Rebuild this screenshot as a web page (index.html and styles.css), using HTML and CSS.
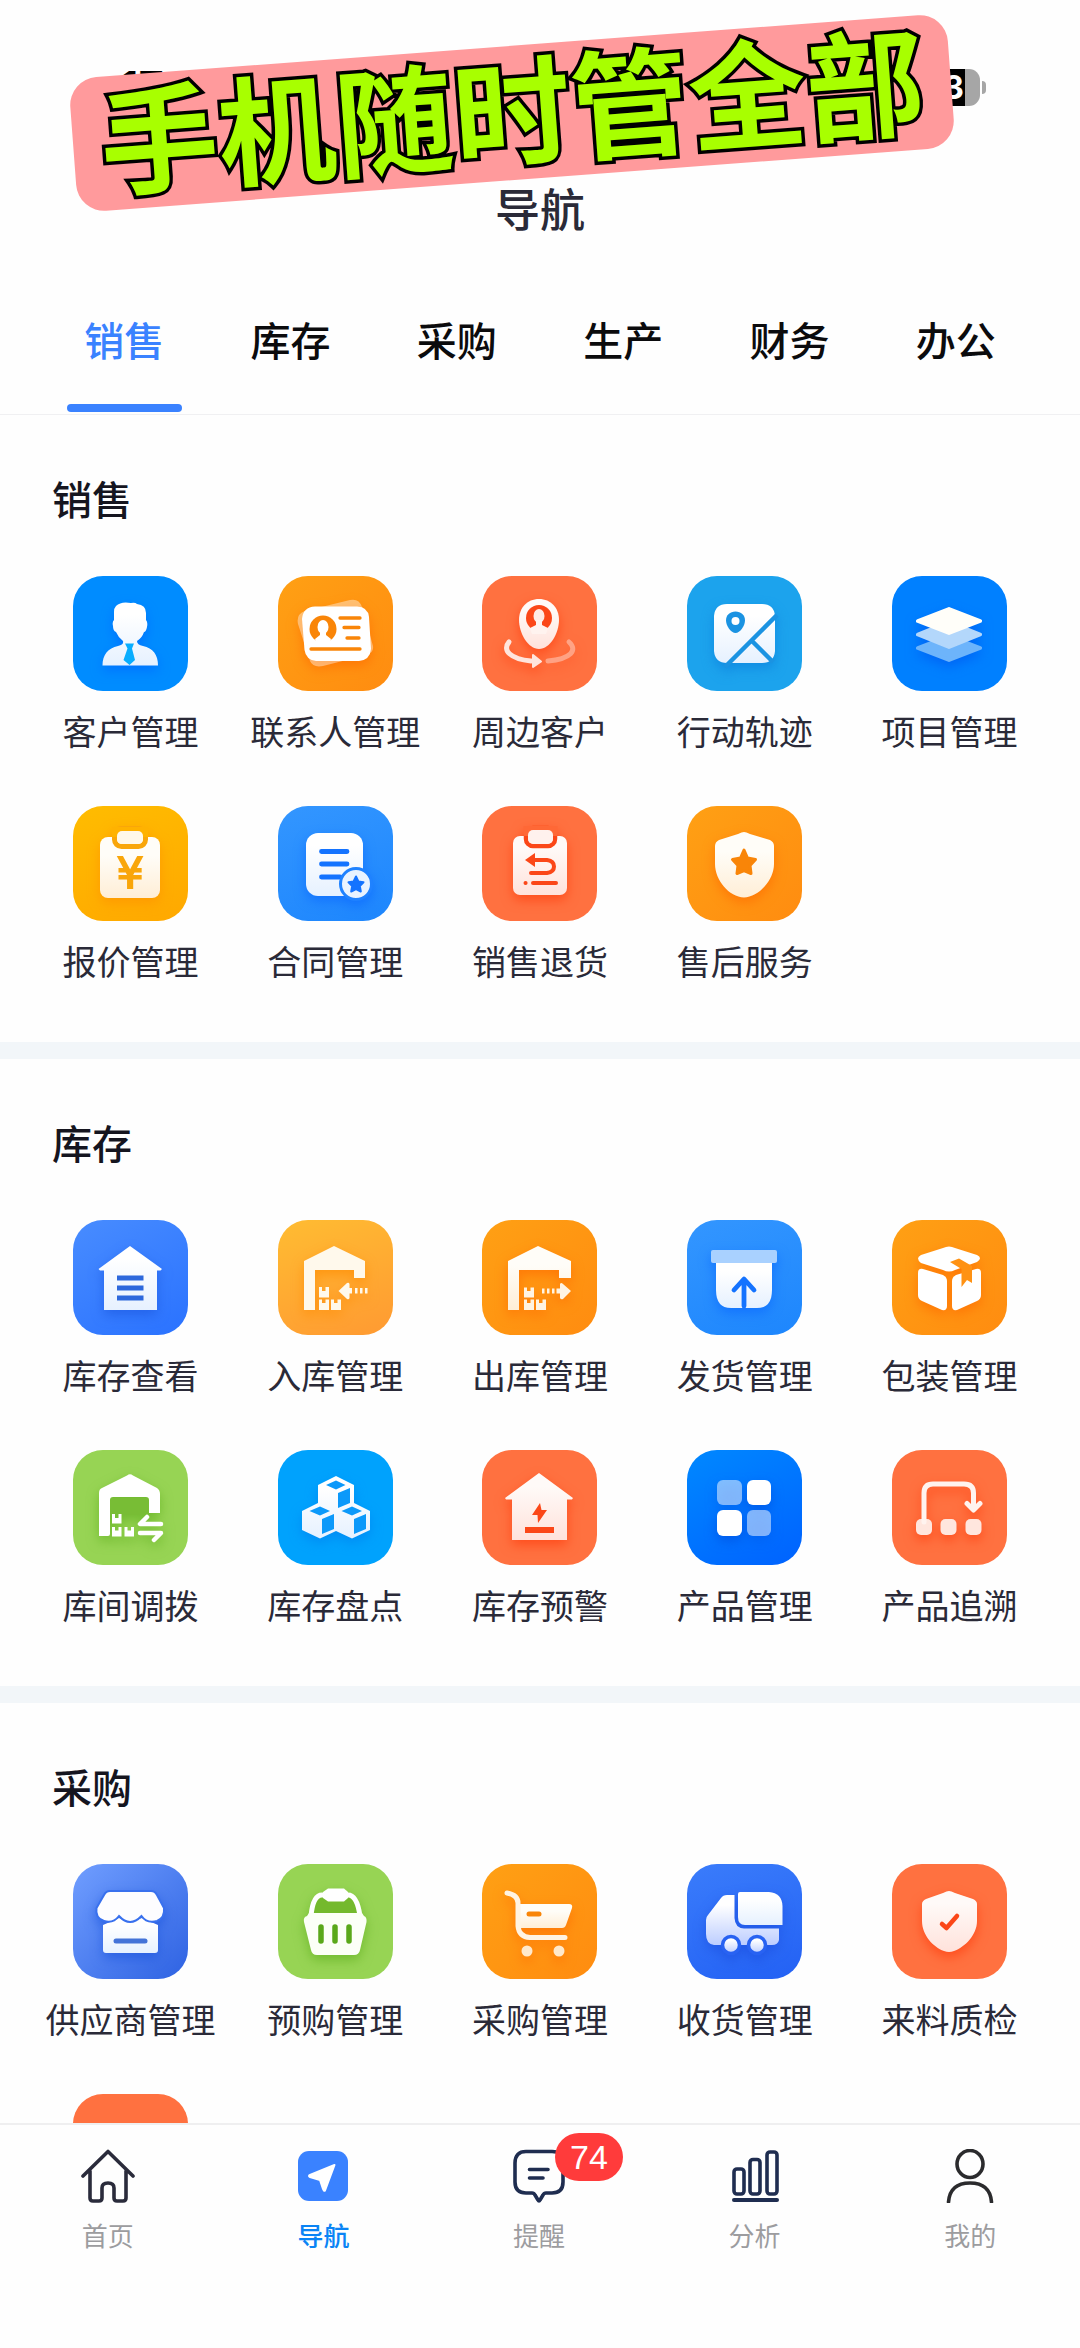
FILE: index.html
```
<!DOCTYPE html>
<html lang="zh-CN">
<head>
    <meta charset="UTF-8">
    <meta name="viewport" content="width=device-width, initial-scale=1.0">
    <title>导航</title>
    <link rel="stylesheet" href="styles.css">
</head>
<body>
    <!-- shared gradients -->
    <svg class="defs" width="0" height="0">
        <defs>
            <linearGradient id="warm" x1="0" y1="0" x2="0" y2="1"><stop offset="0.3" stop-color="#fffdf8"/><stop offset="1" stop-color="#ffeed6"/></linearGradient>
            <linearGradient id="rose" x1="0" y1="0" x2="0" y2="1"><stop offset="0.2" stop-color="#fffaf8"/><stop offset="1" stop-color="#ffe2db"/></linearGradient>
            <linearGradient id="cool" x1="0" y1="0" x2="0" y2="1"><stop offset="0.2" stop-color="#ffffff"/><stop offset="1" stop-color="#e6f1ff"/></linearGradient>
            <linearGradient id="lilac" x1="0" y1="0" x2="0" y2="1"><stop offset="0.2" stop-color="#ffffff"/><stop offset="1" stop-color="#bccdff"/></linearGradient>
        </defs>
    </svg>

    <div class="app">
        <header>
            <div class="status">
                <span class="time">17</span>
                <span class="battery">3</span>
            </div>
            <h1>导航</h1>
            <div class="banner">手机随时管全部</div>
        </header>

        <nav class="tabs">
            <button type="button" class="tab active">销售</button>
            <button type="button" class="tab">库存</button>
            <button type="button" class="tab">采购</button>
            <button type="button" class="tab">生产</button>
            <button type="button" class="tab">财务</button>
            <button type="button" class="tab">办公</button>
        </nav>

        <main>
            <section>
                <h2>销售</h2>
                <div class="grid">
                    <a href="#" class="item">
                        <span class="tile azure"><svg viewBox="0 0 115 115">
                            <path fill="url(#cool)" d="M43 30Q48 25 58 27Q62 26 64 28Q73 29 73 37V44Q75 46 74 51Q73 56 71 56Q69 62 64 65Q64 69 70 70C80 72 85 79 85 89.500H29.500C29.500 79 35 72 45 70Q51 69 50 65Q45 61 43 56Q40 55 40 50Q39 46 41 44V36Q41 32 43 30z"/>
                            <path fill="#08adff" d="M52 67.500H61L59 72.500 62 84 56.500 89 50.500 84 54.500 72.500z"/>
                        </svg></span>
                        <span class="label">客户管理</span>
                    </a>
                    <a href="#" class="item">
                        <span class="tile orange"><svg viewBox="0 0 115 115">
                            <path fill="#fff" opacity="0.4" d="M27 35L72 24Q81 22 84 31L95 70Q96 77 88 79L45 90Q35 92 32 85L20 48Q18 38 27 35z"/>
                            <path fill="#fff" d="M37 30.500H79Q90 31 91 41L93 73Q92 84 81 85H38Q28 84 26.500 74L24 43Q25 31 37 30.500z"/>
                            <circle cx="45" cy="53" r="13.500" fill="currentColor"/>
                            <ellipse cx="45" cy="51" rx="5.500" ry="7" fill="#fff"/>
                            <path fill="#fff" d="M42 55H48V59L53 63 51 69H39L37 63 42 59z"/>
                            <path stroke="currentColor" stroke-width="3.300" stroke-linecap="round" d="M62 42H82M66 51.500H81M69 62H81M33 73H82"/>
                        </svg></span>
                        <span class="label">联系人管理</span>
                    </a>
                    <a href="#" class="item">
                        <span class="tile coral"><svg viewBox="0 0 115 115">
                            <path fill="url(#rose)" d="M57 23C69 23 77 32 77 44C77 57 68 73 57 73S37 57 37 44C37 32 45 23 57 23z"/>
                            <circle cx="57" cy="42" r="13" fill="currentColor"/>
                            <ellipse cx="57" cy="40" rx="5.500" ry="7" fill="#ffeae4"/>
                            <path fill="#fff3ef" d="M54 44H60V49L66 52 64 58H50L48 52 54 49z"/>
                            <g fill="none" stroke="#ffe5dd" stroke-width="5" stroke-linecap="round">
                                <path d="M27 66C20 74 28 83 49 85"/>
                                <path opacity="0.450" d="M66 85C89 83 96 74 87 66"/>
                            </g>
                            <path fill="#ffe5dd" stroke="#ffe5dd" stroke-width="2" stroke-linejoin="round" d="M51 79L59 85.500 51 91z"/>
                        </svg></span>
                        <span class="label">周边客户</span>
                    </a>
                    <a href="#" class="item">
                        <span class="tile sky"><svg viewBox="0 0 115 115">
                            <path fill="url(#cool)" d="M40 28H75Q87 28 88 40V75Q87 87 75 87H40Q28 87 27 75V40Q28 28 40 28z"/>
                            <path fill="currentColor" d="M48.500 35.500C54 35.500 58 39 58 44.500C58 50 53 57 48.500 57S39 50 39 44.500C39 39 43 35.500 48.500 35.500z"/>
                            <circle cx="48.500" cy="45" r="4" fill="#fff"/>
                            <path stroke="currentColor" stroke-width="4.500" d="M38 91L90 39M64 64L86 86"/>
                        </svg></span>
                        <span class="label">行动轨迹</span>
                    </a>
                    <a href="#" class="item">
                        <span class="tile blue"><svg viewBox="0 0 115 115" stroke-width="4" stroke-linejoin="round">
                            <path fill="#6db4fb" stroke="#6db4fb" d="M57 60L88 72 57 84 26 72z"/>
                            <path fill="#b3d7fb" stroke="#b3d7fb" d="M57 46L88 58.500 57 71 26 58.500z"/>
                            <path fill="#fffef9" stroke="#fffef9" d="M57 33L88 45 57 57 26 45z"/>
                        </svg></span>
                        <span class="label">项目管理</span>
                    </a>
                    <a href="#" class="item">
                        <span class="tile amber"><svg viewBox="0 0 115 115">
                            <rect x="27" y="31" width="60" height="61" rx="8" fill="url(#warm)"/>
                            <rect x="41.500" y="22.500" width="31" height="18" rx="7" fill="#fff8e9" stroke="currentColor" stroke-width="5"/>
                            <path stroke="#ffb200" stroke-width="10" d="M39 26H75"/>
                            <rect x="44" y="25" width="26" height="13" rx="5" fill="#fff8e9"/>
                            <text x="57" y="82" class="yen">¥</text>
                        </svg></span>
                        <span class="label">报价管理</span>
                    </a>
                    <a href="#" class="item">
                        <span class="tile dodger"><svg viewBox="0 0 115 115">
                            <rect x="28" y="27" width="57" height="63" rx="12" fill="url(#cool)"/>
                            <path stroke="currentColor" stroke-width="4.800" stroke-linecap="round" d="M43.500 45.500H69M43.500 58H69M43.500 71H62"/>
                            <circle cx="78" cy="78" r="15.500" fill="#e9f3ff" stroke="#1f82ff" stroke-width="3"/>
                            <path fill="currentColor" stroke="currentColor" stroke-width="2" stroke-linejoin="round" d="M78 70.500L80.400 75.500 85.500 76.200 81.800 80 82.800 85.500 78 83 73.200 85.500 74.200 80 70.500 76.200 75.600 75.500z"/>
                        </svg></span>
                        <span class="label">合同管理</span>
                    </a>
                    <a href="#" class="item">
                        <span class="tile coral"><svg viewBox="0 0 115 115">
                            <rect x="31" y="30" width="54" height="59" rx="7" fill="url(#rose)"/>
                            <rect x="44" y="22" width="29" height="18" rx="7" fill="#fff1ed" stroke="currentColor" stroke-width="4.500"/>
                            <path stroke="#ff6836" stroke-width="10" d="M41.500 25H75.500"/>
                            <rect x="46" y="24" width="25" height="14" rx="5" fill="#fff1ed"/>
                            <path fill="currentColor" d="M43 54L53 47V61z"/>
                            <path fill="none" stroke="currentColor" stroke-width="4" stroke-linecap="round" d="M52 54H65Q72 55 72 60.500Q72 66 65 67H49M51 77H74M43.500 77h0.100"/>
                        </svg></span>
                        <span class="label">销售退货</span>
                    </a>
                    <a href="#" class="item">
                        <span class="tile orange"><svg viewBox="0 0 115 115">
                            <path fill="url(#warm)" d="M57 26Q59 26 63 28L83 34Q87 36 87 40V58C87 74 72 91 57 91.500C42 91 28 74 28 58V40Q28 36 32 34L51 28Q55 26 57 26z"/>
                            <path fill="currentColor" stroke="currentColor" stroke-width="3" stroke-linejoin="round" d="M57 44L60.500 52 68.500 53.500 63 59.500 64 67.500 57 64.500 50 67.500 51 59.500 45.500 53.500 53.500 52z"/>
                        </svg></span>
                        <span class="label">售后服务</span>
                    </a>
                </div>
            </section>

            <section>
                <h2>库存</h2>
                <div class="grid">
                    <a href="#" class="item">
                        <span class="tile royal"><svg viewBox="0 0 115 115">
                            <path fill="url(#cool)" d="M57 26L89 49 87.500 50.500H84V90H31V50.500H27L25.500 49z"/>
                            <path stroke="#2d68dc" stroke-width="5" d="M44 58H70.500M44 68H70.500M44 78H70.500"/>
                        </svg></span>
                        <span class="label">库存查看</span>
                    </a>
                    <a href="#" class="item">
                        <span class="tile honey"><svg viewBox="0 0 115 115" fill="#fff9ec">
                            <path d="M26 41L56 26 87 41V58H76V50H37V90H26z"/>
                            <path d="M41 67H44V71H47.500V67H51V77.500H41zM41 79.500H44V83H47.500V79.500H51V90H41zM53 79.500H56V83H59.500V79.500H63V90H53z"/>
                            <path d="M60.500 71L69 63Q71 62 71.500 64V68H74V73.500H71.500V78Q71 80 69 79zM77 68H79.500V73.500H77zM82 68H84.500V73.500H82zM87 68H89.500V73.500H87z"/>
                        </svg></span>
                        <span class="label">入库管理</span>
                    </a>
                    <a href="#" class="item">
                        <span class="tile orange"><svg viewBox="0 0 115 115" fill="#fff3e2">
                            <path fill="url(#warm)" d="M26 41L56 26 89 41V58H77V50H37V90H26z"/>
                            <path d="M42 67.500H45V71H48.500V67.500H52V77.500H42zM42 79.500H45V83H48.500V79.500H52V90H42zM54 79.500H57V83H60.500V79.500H64V90H54z"/>
                            <path d="M60 68.500H62.500V73.500H60zM65 68.500H67.500V73.500H65zM70 68.500H72.500V73.500H70zM74.500 68.500H78V64Q79 62 81 64L89 71 81 79Q79 80 78 78V73.500H74.500z"/>
                        </svg></span>
                        <span class="label">出库管理</span>
                    </a>
                    <a href="#" class="item">
                        <span class="tile dodger"><svg viewBox="0 0 115 115">
                            <path fill="url(#cool)" d="M29 42H85V70Q85 88 70 88H44Q29 88 29 70z"/>
                            <rect x="24" y="30" width="66" height="13" rx="2" fill="#a9d1ff"/>
                            <path fill="none" stroke="currentColor" stroke-width="4.800" stroke-linejoin="round" stroke-linecap="round" d="M47 70L57 59 67 70M57 60V86"/>
                        </svg></span>
                        <span class="label">发货管理</span>
                    </a>
                    <a href="#" class="item">
                        <span class="tile orange"><svg viewBox="0 0 115 115" fill="#fff">
                            <path d="M51 28Q57 25 63 28L85 35Q91 38 85 42L63 50Q57 53 51 50L29 43Q23 38 29 35z"/>
                            <path d="M26 53Q26 48 31 49L51 55Q55 57 55 61V86Q55 91 50 90L30 81Q26 79 26 75z"/>
                            <path d="M89 53Q89 48 84 49L64 55Q60 57 60 61V86Q60 91 65 90L85 81Q89 79 89 75z"/>
                            <path fill="#ff9213" d="M58 42L67 38.500 80 46V63L75 60 69.500 67V49z"/>
                        </svg></span>
                        <span class="label">包装管理</span>
                    </a>
                    <a href="#" class="item">
                        <span class="tile green"><svg viewBox="0 0 115 115" fill="#fff">
                            <path d="M37 48H76V65H37z" fill="#78bd35"/>
                            <path d="M29 38L54 25.500Q57 23 60 25.500L84 38Q87 40 87 44V63H76V50Q76 47 73 47H40Q37 47 37 50V84Q37 86 35 86H26V43Q26 39 29 38z"/>
                            <path d="M39 64H42V68H45.500V64H48.500V73.500H39zM39 77H42V80.500H45.500V77H48.500V86.500H39zM51.500 77H54.500V80.500H58V77H61V86.500H51.500z"/>
                            <path fill="none" stroke="#fff" stroke-width="4.500" stroke-linecap="round" stroke-linejoin="round" d="M74 67L67 74H88M67 83H88L81 90"/>
                        </svg></span>
                        <span class="label">库间调拨</span>
                    </a>
                    <a href="#" class="item">
                        <span class="tile cyan"><svg viewBox="0 0 115 115">
                            <path fill="url(#cool)" d="M58 26L76 35V53L92 61V80L74 88.500 58 81 42 88.500 24 80V61L40 53V35z"/>
                            <path fill="currentColor" d="M48 35L58 30.500 67.500 35 58 39.500zM60 43L72 38V53L60 58zM31.500 61L42 56.500 52 61 42 65.500zM44 69L56 64V79L44 84zM63.500 61L74 56.500 84 61 74 65.500zM76 69L88 64V79L76 84z"/>
                        </svg></span>
                        <span class="label">库存盘点</span>
                    </a>
                    <a href="#" class="item">
                        <span class="tile coral"><svg viewBox="0 0 115 115">
                            <path fill="url(#rose)" d="M57 23L91 48 90 49.500H85V90H30V49.500H24L23 48z"/>
                            <path fill="currentColor" d="M58 53L50 65H55.500L56 73 65 60H59.500zM43 77H72V83H43z"/>
                        </svg></span>
                        <span class="label">库存预警</span>
                    </a>
                    <a href="#" class="item">
                        <span class="tile cobalt"><svg viewBox="0 0 115 115" fill="#fff">
                            <rect x="30" y="30" width="25" height="25" rx="6" opacity="0.500"/>
                            <rect x="60" y="30" width="24" height="25" rx="6"/>
                            <rect x="30" y="60" width="25" height="26" rx="6"/>
                            <rect x="60" y="60" width="24" height="26" rx="6" opacity="0.500"/>
                        </svg></span>
                        <span class="label">产品管理</span>
                    </a>
                    <a href="#" class="item">
                        <span class="tile coral"><svg viewBox="0 0 115 115" fill="#ffe6de">
                            <rect x="24" y="69" width="16" height="16" rx="5"/>
                            <rect x="48.500" y="69" width="16" height="16" rx="5"/>
                            <rect x="73.500" y="69" width="16" height="16" rx="5"/>
                            <path fill="none" stroke="#fff3ef" stroke-width="5" stroke-linecap="round" stroke-linejoin="round" d="M32 72V43Q32 34 41 34H72Q81.500 34 81.500 43V59M75 53.500L81.500 60 88 53.500"/>
                        </svg></span>
                        <span class="label">产品追溯</span>
                    </a>
                </div>
            </section>

            <section>
                <h2>采购</h2>
                <div class="grid">
                    <a href="#" class="item">
                        <span class="tile indigo"><svg viewBox="0 0 115 115">
                            <path fill="url(#cool)" d="M30 61L46 54 57 58 69 54 85 61V86Q85 89 82 89H33Q30 89 30 86z"/>
                            <path fill="#fdfdff" stroke="#3971ee" stroke-width="2" d="M37 27H78Q82 27 84 31L91 44Q92 54 84 57Q74 60 68.500 52Q57 64 46 52Q40 60 31 57Q22 54 23.500 44L31 31Q33 27 37 27z"/>
                            <path stroke="#4373d8" stroke-width="5" stroke-linecap="round" d="M43 77H72"/>
                        </svg></span>
                        <span class="label">供应商管理</span>
                    </a>
                    <a href="#" class="item">
                        <span class="tile green"><svg viewBox="0 0 115 115">
                            <path fill="#74b92d" stroke="#fff" stroke-width="5" d="M33 52Q35 31 44 31H70Q79 31 82 52z"/>
                            <path fill="#fff" d="M50 24.500H66L70 28V34L66 37.500H50L45 34V28z"/>
                            <path fill="#fcfff7" d="M31 49H84L86 52Q89 53 88.500 58L82 86Q81 91 76 91H39Q34 91 33 86L26 58Q25 53 29 52z"/>
                            <path stroke="#5aa81a" stroke-width="5.500" stroke-linecap="round" d="M43 63V77M57 63V77M71 63V77"/>
                        </svg></span>
                        <span class="label">预购管理</span>
                    </a>
                    <a href="#" class="item">
                        <span class="tile orange"><svg viewBox="0 0 115 115">
                            <path fill="url(#warm)" d="M37 40H87Q91 40 90 44L84 61Q83 64 80 64H37z"/>
                            <path fill="none" stroke="#fff3e2" stroke-width="5" stroke-linecap="round" d="M25 29Q36 31 36 39V62Q37 73 48 73.500H83"/>
                            <path stroke="currentColor" stroke-width="5" stroke-linecap="round" d="M47 50H57"/>
                            <circle cx="45" cy="87" r="5.500" fill="#ffe9cc"/>
                            <circle cx="77" cy="87" r="5.500" fill="#ffe9cc"/>
                        </svg></span>
                        <span class="label">采购管理</span>
                    </a>
                    <a href="#" class="item">
                        <span class="tile navy"><svg viewBox="0 0 115 115">
                            <path fill="url(#lilac)" d="M40 31H47.500V54Q48 64 57 64.500H92V76Q91 81 85 81H27Q19 80 19 70V56Q19 53 21 51L34 34Q36 31 40 31z"/>
                            <path fill="url(#cool)" d="M53 28H82Q95 29 95.500 42V61H58Q51 61 51 53V30Q51 28 53 28z"/>
                            <g fill="url(#lilac)" stroke="currentColor" stroke-width="3.500">
                                <circle cx="44" cy="81" r="8.500"/>
                                <circle cx="70" cy="81" r="8.500"/>
                            </g>
                        </svg></span>
                        <span class="label">收货管理</span>
                    </a>
                    <a href="#" class="item">
                        <span class="tile coral"><svg viewBox="0 0 115 115">
                            <path fill="url(#rose)" d="M57 27Q59 27 63 29L81 35Q85 37 85 40V57C85 71 73 83 62 87Q57 89 52 87C41 83 30 71 30 57V40Q30 37 34 35L51 29Q55 27 57 27z"/>
                            <path fill="none" stroke="currentColor" stroke-width="4.500" stroke-linecap="round" stroke-linejoin="round" d="M50 60L54.500 64 65 52"/>
                        </svg></span>
                        <span class="label">来料质检</span>
                    </a>
                    <a href="#" class="item">
                        <span class="tile coral"></span>
                    </a>
                </div>
            </section>
        </main>

        <nav class="bottom">
            <a href="#">
                <svg viewBox="0 0 54 54" fill="none" stroke="#2a2b3b" stroke-width="3.600" stroke-linecap="round" stroke-linejoin="round">
                    <path d="M2 27L27 2.500 52 27M9 22V49Q9 52 12 52H18Q21 52 21 49V39Q21 34 27 34T33 39V49Q33 52 36 52H42Q45 52 45 49V22"/>
                </svg>
                <span>首页</span>
            </a>
            <a href="#" class="active">
                <svg viewBox="0 0 54 54">
                    <rect x="2" y="2" width="50" height="50" rx="11" fill="#3a82ff"/>
                    <path fill="#fff" stroke="#fff" stroke-width="2" stroke-linejoin="round" d="M38.500 16L29 41.500Q28 42.500 27 40L24 31 14 28Q12 27 14 26z"/>
                </svg>
                <span>导航</span>
            </a>
            <a href="#">
                <svg viewBox="0 0 54 54" fill="none" stroke="#1f2d50" stroke-width="3.600" stroke-linecap="round" stroke-linejoin="round">
                    <path d="M14 2.500H40Q51 2.500 51 14V33Q51 44 40 44H34Q32 44 31 46L28 51Q27 53 26 51L23 46Q22 44 20 44H14Q3 44 3 33V14Q3 2.500 14 2.500zM17.500 20.500H36M17.500 29H31"/>
                </svg>
                <b class="badge">74</b>
                <span>提醒</span>
            </a>
            <a href="#">
                <svg viewBox="0 0 54 54" fill="none" stroke="#1f2d50" stroke-width="3.600">
                    <rect x="6" y="20" width="10" height="25" rx="3"/>
                    <rect x="22" y="10.500" width="10" height="34.500" rx="3"/>
                    <rect x="39" y="3" width="10" height="42" rx="3"/>
                    <path stroke-width="4" stroke-linecap="round" d="M6 51H49"/>
                </svg>
                <span>分析</span>
            </a>
            <a href="#">
                <svg viewBox="0 0 54 54" fill="none" stroke="#2b2b2d" stroke-width="3.600" stroke-linecap="round">
                    <ellipse cx="27" cy="15" rx="13" ry="13.500"/>
                    <path d="M5.500 53Q7 34 27 34T48.500 53"/>
                </svg>
                <span>我的</span>
            </a>
        </nav>
    </div>
</body>
</html>
```
FILE: styles.css
```
* {
    box-sizing: border-box;
}

body {
    margin: 0;
    background: #fefefe;
    color: #2a2a38;
    font-family: "Noto Sans CJK SC", sans-serif;
}

a {
    color: inherit;
    text-decoration: none;
}

.defs {
    position: absolute;
}

.app {
    display: flex;
    flex-direction: column;
    height: 100vh;
}

/* header */
header {
    position: relative;
}

.status {
    display: flex;
    justify-content: space-between;
    align-items: center;
    height: 174px;
    padding: 0 100px 0 120px;
}

.time {
    color: #000;
    font-family: Inter, sans-serif;
    font-size: 44px;
    font-weight: 600;
}

.battery {
    position: relative;
    width: 75px;
    height: 37px;
    padding-right: 16px;
    border-radius: 11px;
    background: linear-gradient(to right, #000 80%, #a6a6a6 80%);
    color: #fff;
    font-family: Inter, sans-serif;
    font-size: 32px;
    font-weight: 700;
    line-height: 37px;
    text-align: right;
}

.battery::after {
    content: "";
    position: absolute;
    top: 12px;
    right: -6px;
    width: 4px;
    height: 13px;
    border-radius: 0 4px 4px 0;
    background: #a6a6a6;
}

h1 {
    margin: 0;
    padding-bottom: 4px;
    font-size: 45px;
    font-weight: 500;
    line-height: 68px;
    text-align: center;
}

.banner {
    position: absolute;
    top: 46px;
    left: 72px;
    padding: 0 27px 14px;
    border-radius: 28px;
    background: #ff9a9c;
    color: #a8ff00;
    font-size: 118px;
    font-weight: 700;
    line-height: 120px;
    white-space: nowrap;
    -webkit-text-stroke: 7px #000;
    paint-order: stroke fill;
    transform: rotate(-4.3deg);
}

/* top tabs */
.tabs {
    display: flex;
    padding: 0 41px 2px;
    border-bottom: 1px solid #f0f0f2;
}

.tab {
    flex: 1;
    padding: 63px 0 0;
    border: none;
    background: none;
    color: #0b0b0d;
    font-family: inherit;
    font-size: 40px;
    font-weight: 500;
    line-height: 60px;
    cursor: pointer;
}

.tab::after {
    content: "";
    display: block;
    width: 115px;
    height: 8px;
    margin: 35px auto 0;
    border-radius: 4px;
}

.tab.active {
    color: #3a82ff;
}

.tab.active::after {
    background: #3a82ff;
}

/* menu sections */
main {
    flex: 1;
    min-height: 0;
    overflow-y: auto;
    scrollbar-width: none;
}

section {
    padding: 53px 28px 57px;
    border-bottom: 17px solid #f2f6f9;
}

h2 {
    margin: 0 0 48px;
    padding-left: 24px;
    color: #15151f;
    font-size: 40px;
    font-weight: 500;
    line-height: 60px;
}

.grid {
    display: grid;
    grid-template-columns: repeat(5, 1fr);
    row-gap: 51px;
}

.item {
    display: flex;
    flex-direction: column;
    align-items: center;
    gap: 16px;
}

.label {
    font-size: 34px;
    line-height: 48px;
    white-space: nowrap;
}

.tile {
    width: 115px;
    height: 115px;
    border-radius: 30px;
    overflow: hidden;
}

.tile svg {
    display: block;
    filter: drop-shadow(0 5px 6px var(--shadow));
}

.azure {
    --shadow: #0068ffaa;
    background: #008cff;
}

.orange {
    --shadow: #ff6a00aa;
    color: #f98508;
    background: linear-gradient(135deg, #ffa014, #ff8c10);
}

.coral {
    --shadow: #ff3a0aaa;
    color: #fb4718;
    background: #ff7140;
}

.sky {
    --shadow: #0c7fdcaa;
    color: #1b93e2;
    background: #1ca3ed;
}

.blue {
    --shadow: #0058f0aa;
    background: #0080ff;
}

.amber {
    --shadow: #ff9000aa;
    color: #f9a60a;
    background: linear-gradient(160deg, #ffbc00, #ffa800);
}

.dodger {
    --shadow: #0a68ffaa;
    color: #1473ff;
    background: linear-gradient(160deg, #3396ff, #1d86fd);
}

.royal {
    --shadow: #1c58e0aa;
    background: linear-gradient(150deg, #488cff, #2a72ff);
}

.honey {
    --shadow: #ff8a00aa;
    background: linear-gradient(160deg, #ffbc32, #ff9a32);
}

.green {
    --shadow: #5fae1eaa;
    background: #97d454;
}

.cyan {
    --shadow: #0083f0aa;
    color: #0c99fa;
    background: #00a2fd;
}

.cobalt {
    --shadow: #0050e0aa;
    background: linear-gradient(150deg, #0088ff, #0062ff);
}

.indigo {
    --shadow: #1d55dcaa;
    background: linear-gradient(135deg, #709eff, #2e62e2);
}

.navy {
    --shadow: #1c50e0aa;
    color: #2862f2;
    background: linear-gradient(160deg, #3a7cfb, #2361f4);
}

.yen {
    fill: currentColor;
    stroke: currentColor;
    stroke-width: 2px;
    font-family: "DejaVu Sans", sans-serif;
    font-size: 42px;
    text-anchor: middle;
}

/* bottom bar */
.bottom {
    display: flex;
    height: 225px;
    padding-right: 2px;
    border-top: 2px solid #efeff0;
}

.bottom a {
    position: relative;
    flex: 1;
    display: flex;
    flex-direction: column;
    align-items: center;
    gap: 13px;
    padding-top: 24px;
    color: #9c9c9f;
    font-size: 26px;
    line-height: 38px;
}

.bottom .active {
    color: #0a84f5;
    font-weight: 500;
}

.bottom svg {
    width: 54px;
    height: 54px;
}

.badge {
    position: absolute;
    top: 8px;
    left: 50%;
    width: 68px;
    margin-left: 16px;
    border-radius: 24px;
    background: #ff3b3b;
    color: #fff;
    font-family: "Liberation Sans", sans-serif;
    font-size: 34px;
    font-weight: 400;
    line-height: 48px;
    text-align: center;
}
```
